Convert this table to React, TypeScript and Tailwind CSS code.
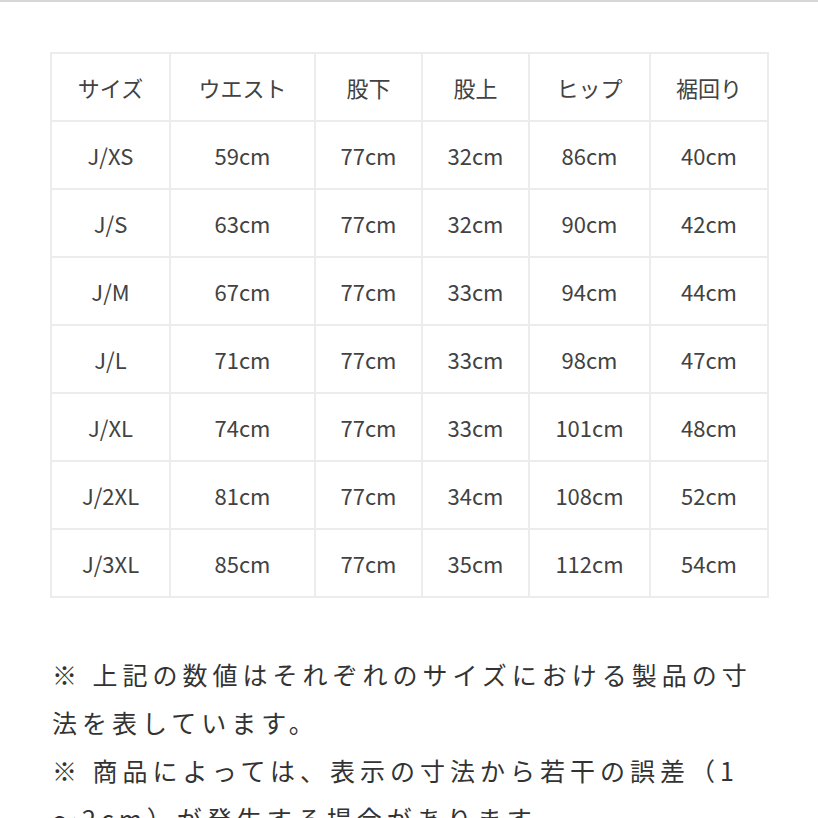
const headers = ["サイズ", "ウエスト", "股下", "股上", "ヒップ", "裾回り"];

const rows = [
  ["J/XS", "59cm", "77cm", "32cm", "86cm", "40cm"],
  ["J/S", "63cm", "77cm", "32cm", "90cm", "42cm"],
  ["J/M", "67cm", "77cm", "33cm", "94cm", "44cm"],
  ["J/L", "71cm", "77cm", "33cm", "98cm", "47cm"],
  ["J/XL", "74cm", "77cm", "33cm", "101cm", "48cm"],
  ["J/2XL", "81cm", "77cm", "34cm", "108cm", "52cm"],
  ["J/3XL", "85cm", "77cm", "35cm", "112cm", "54cm"],
];

const font = { fontFamily: "'Noto Sans CJK JP', 'Noto Sans', sans-serif" };

function Cell({ children }: { children: React.ReactNode }) {
  return (
    <div className="bg-white flex items-center justify-center h-[66px] text-[22px] text-[#424242]">
      {children}
    </div>
  );
}

export default function App() {
  return (
    <div className="w-[818px] h-[818px] bg-white overflow-hidden" style={font}>
      <div className="h-[2px] bg-[#d6d6d6]" />
      <div className="pl-[50px] pt-[50px]">
        <div className="w-[719px] grid grid-cols-[117px_143px_105px_105px_119px_116px] gap-[2px] p-[2px] bg-[#ececec]">
          {headers.map((h) => (
            <Cell key={h}>{h}</Cell>
          ))}
          {rows.map((r) =>
            r.map((v, i) => <Cell key={r[0] + i}>{v}</Cell>)
          )}
        </div>

        <div className="w-[712px] pl-[2px] mt-[52px] text-[25px] leading-[48px] tracking-[5px] text-[#333333]">
          <p>※ 上記の数値はそれぞれのサイズにおける製品の寸法を表しています。</p>
          <p>※ 商品によっては、表示の寸法から若干の誤差（1～2cm）が発生する場合があります。</p>
        </div>
      </div>
    </div>
  );
}
